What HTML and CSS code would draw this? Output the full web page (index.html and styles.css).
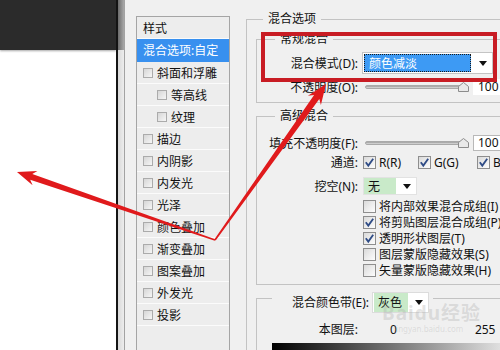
FILE: index.html
```html
<!DOCTYPE html>
<html lang="zh-CN">
<head>
<meta charset="utf-8">
<title>图层样式</title>
<link rel="stylesheet" href="styles.css">
</head>
<body>
<div class="page">
  <div class="canvas"><div class="canvas-top"></div></div>
  <div class="edge"></div>
  <div class="scroll"><div class="scroll-top"></div></div>
  <div class="dialog">
    <div class="styles-list">
      <div class="li head">样式</div>
      <div class="li sel">混合选项:自定</div>
      <div class="li"><span class="lcb"></span>斜面和浮雕</div>
      <div class="li sub"><span class="lcb"></span>等高线</div>
      <div class="li sub"><span class="lcb"></span>纹理</div>
      <div class="li"><span class="lcb"></span>描边</div>
      <div class="li"><span class="lcb"></span>内阴影</div>
      <div class="li"><span class="lcb"></span>内发光</div>
      <div class="li"><span class="lcb"></span>光泽</div>
      <div class="li"><span class="lcb"></span>颜色叠加</div>
      <div class="li"><span class="lcb"></span>渐变叠加</div>
      <div class="li"><span class="lcb"></span>图案叠加</div>
      <div class="li"><span class="lcb"></span>外发光</div>
      <div class="li"><span class="lcb"></span>投影</div>
    </div>
    <fieldset class="grp outer">
      <legend>混合选项</legend>
      <fieldset class="grp inner general">
        <legend>常规混合</legend>
        <div class="row r-mode">
          <span class="lab">混合模式(D):</span>
          <div class="select mode"><span class="val blue">颜色减淡</span><span class="caret"></span></div>
        </div>
        <div class="row r-opac">
          <span class="lab">不透明度(O):</span>
          <div class="slider"><span class="track"></span><svg class="thumb" width="11" height="10" viewBox="0 0 11 10"><polygon points="5.5,0.5 10.5,4.5 10.5,9.5 0.5,9.5 0.5,4.5" fill="#e9e9e9" stroke="#8c8c8c"/></svg></div>
          <span class="num plain">100</span>
        </div>
      </fieldset>
      <fieldset class="grp inner advanced">
        <legend>高级混合</legend>
        <div class="row r-fill">
          <span class="lab">填充不透明度(F):</span>
          <div class="slider"><span class="track"></span><svg class="thumb" width="11" height="10" viewBox="0 0 11 10"><polygon points="5.5,0.5 10.5,4.5 10.5,9.5 0.5,9.5 0.5,4.5" fill="#e9e9e9" stroke="#8c8c8c"/></svg></div>
          <span class="num">100</span>
        </div>
        <div class="row r-chan">
          <span class="lab">通道:</span>
          <span class="opt w1"><span class="ck"><svg width="11" height="11" viewBox="0 0 11 11"><path d="M1.8 5.2 L4.3 8.6 L9.2 1.8" fill="none" stroke="#2f4c86" stroke-width="1.8"/></svg></span>R(R)</span>
          <span class="opt w2"><span class="ck"><svg width="11" height="11" viewBox="0 0 11 11"><path d="M1.8 5.2 L4.3 8.6 L9.2 1.8" fill="none" stroke="#2f4c86" stroke-width="1.8"/></svg></span>G(G)</span>
          <span class="opt"><span class="ck"><svg width="11" height="11" viewBox="0 0 11 11"><path d="M1.8 5.2 L4.3 8.6 L9.2 1.8" fill="none" stroke="#2f4c86" stroke-width="1.8"/></svg></span>B(B)</span>
        </div>
        <div class="row r-knock">
          <span class="lab">挖空(N):</span>
          <div class="select knock"><span class="val green">无</span><span class="caret"></span></div>
        </div>
        <div class="checks">
          <div class="opt line"><span class="ck"></span>将内部效果混合成组(I)</div>
          <div class="opt line"><span class="ck"><svg width="11" height="11" viewBox="0 0 11 11"><path d="M1.8 5.2 L4.3 8.6 L9.2 1.8" fill="none" stroke="#2f4c86" stroke-width="1.8"/></svg></span>将剪贴图层混合成组(P)</div>
          <div class="opt line"><span class="ck"><svg width="11" height="11" viewBox="0 0 11 11"><path d="M1.8 5.2 L4.3 8.6 L9.2 1.8" fill="none" stroke="#2f4c86" stroke-width="1.8"/></svg></span>透明形状图层(T)</div>
          <div class="opt line"><span class="ck"></span>图层蒙版隐藏效果(S)</div>
          <div class="opt line"><span class="ck"></span>矢量蒙版隐藏效果(H)</div>
        </div>
      </fieldset>
      <fieldset class="grp inner blendif">
        <legend><span class="lg-row"><span class="blab">混合颜色带(E):</span><span class="select gray"><span class="val green">灰色</span><span class="caret"></span></span></span></legend>
        <div class="row r-layer">
          <span class="lab">本图层:</span>
          <span class="v0">0</span>
          <span class="v255">255</span>
        </div>
        <div class="ramp"></div>
      </fieldset>
    </fieldset>
  </div>
  <div class="mark"><span class="mk-big">Baidu经验</span><span class="mk-small">jingyan.baidu.com</span></div>
  <div class="callout"></div>
  <svg class="arrows" width="500" height="350" viewBox="0 0 500 350">
    <polygon fill="#e01a1c" points="17,172 37.4,171.1 32.3,173.9 215.2,239.3 214.8,240.7 30.2,179.8 32.6,185.3"/>
    <polygon fill="#e01a1c" points="326,84 320.9,104.9 319.3,98.9 215.7,240.5 214.3,239.5 314.1,95.1 307.9,95.7"/>
  </svg>
</div>
</body>
</html>
```
FILE: styles.css
```css
* { box-sizing: border-box; }
html, body { margin: 0; padding: 0; }
body {
  width: 500px;
  height: 350px;
  overflow: hidden;
  background: #fff;
  font-family: "Noto Sans", "Noto Sans CJK SC", sans-serif;
  font-size: 12px;
  color: #111;
}
.page {
  position: relative;
  display: flex;
  width: 500px;
  height: 350px;
  overflow: hidden;
}
.canvas { width: 116px; flex: none; background: #fff; }
.canvas-top { height: 50px; background: #2b2b2b; box-shadow: 0 1px 2px rgba(0,0,0,0.35); }
.edge { width: 2px; flex: none; background: #141414; }
.scroll {
  width: 7px;
  flex: none;
  background: linear-gradient(90deg, #d9d9d9, #ededed);
  border-right: 1px solid #a3a3a3;
}
.scroll-top { height: 50px; background: linear-gradient(90deg, #6c6c6c, #a9a9a9); }

.dialog {
  flex: 1;
  min-width: 0;
  display: flex;
  align-items: flex-start;
  gap: 16px;
  padding: 12px 0 0 11px;
  background: #f0f0f0;
  overflow: hidden;
}

/* styles list */
.styles-list {
  flex: none;
  width: 94px;
  height: 340px;
  margin-top: 4px;
  border: 1px solid #a5a5a5;
  background: #ededed;
}
.li {
  display: flex;
  align-items: center;
  height: 22px;
  padding-left: 6px;
  border-bottom: 1px solid #fbfbfb;
  white-space: nowrap;
}
.li.head { height: 22px; }
.li.sel { height: 23px; background: #3890ef; color: #fff; border-bottom-color: #3890ef; }
.li.sub { padding-left: 20px; }
.lcb {
  flex: none;
  width: 10px;
  height: 10px;
  margin-right: 4px;
  border: 1px solid #ababab;
  background: linear-gradient(135deg, #d6d6d6, #f6f6f6);
}

/* group boxes */
.grp {
  margin: 0;
  padding: 0;
  min-width: 0;
  border: 1px solid #c3c3c3;
}
.grp > legend { padding: 0 5px; line-height: 14px; }
.outer { flex: none; width: 280px; height: 360px; padding: 0 0 0 9px; }
.outer > legend { margin-left: 7px; }
.inner > legend { margin-left: 18px; }
.general { margin-top: 6px; padding-bottom: 4px; }
.advanced { margin-top: 6px; padding-bottom: 6px; }

.row { display: flex; align-items: center; white-space: nowrap; }
.lab { flex: none; width: 101px; text-align: right; }

.r-mode { height: 22px; margin-top: 6px; }
.r-opac { height: 22px; margin-top: 2px; }
.r-fill { height: 17px; margin-top: 11px; }
.r-chan { height: 16px; margin-top: 3px; }
.r-knock { height: 18px; margin-top: 7px; }

/* selects */
.select {
  flex: none;
  display: flex;
  align-items: center;
  background: #fff;
  border: 1px solid #c4c4c4;
}
.val { display: flex; align-items: center; height: 100%; }
.val.blue {
  width: 107px;
  height: 18px;
  margin-left: 1px;
  padding-left: 4px;
  background: #3d9af4;
  color: #fff;
  border: 1px dotted #1a1a1a;
}
.val.green { background: #c9eac9; padding-left: 4px; }
.caret {
  width: 0;
  height: 0;
  border-left: 4.5px solid transparent;
  border-right: 4.5px solid transparent;
  border-top: 5px solid #111;
}
.mode { width: 131px; height: 22px; margin-left: 4px; }
.mode .caret { margin-left: 8px; }
.knock { width: 54px; height: 18px; margin-left: 5px; border-color: #e2e2e2; }
.knock .val { width: 32px; }
.knock .caret { margin-left: 7px; }

/* sliders */
.slider { position: relative; flex: none; width: 103px; height: 12px; margin-left: 7px; }
.track {
  display: block;
  margin-top: 4px;
  height: 4px;
  border-radius: 2px;
  background: linear-gradient(#9b9b9b, #dedede);
  border: 1px solid #a9a9a9;
}
.thumb { position: absolute; left: 93px; top: 1px; }
.num {
  flex: none;
  width: 32px;
  height: 16px;
  margin-left: 5px;
  padding-left: 4px;
  line-height: 14px;
  background: #fff;
  border: 1px solid #b8b8b8;
}
.num.plain { border-color: #fff; }

/* checkboxes */
.opt { display: flex; align-items: center; white-space: nowrap; }
.w1 { width: 55px; margin-left: 5px; }
.w2 { width: 59px; }
.ck {
  flex: none;
  display: flex;
  width: 13px;
  height: 13px;
  margin-right: 3px;
  border: 1px solid #8e8e8e;
  background: linear-gradient(135deg, #dadada, #fdfdfd);
}
.checks { margin-top: 3px; padding-left: 106px; }
.line { height: 16px; }

/* blend-if */
.blendif { margin-top: -2px; height: 80px; }
.blendif > legend { margin-left: 15px; padding: 9px 4px 0 20px; }
.lg-row { display: flex; align-items: center; }
.blab { line-height: 21px; }
.gray { width: 57px; height: 21px; margin-left: 3px; border-color: #dcdcdc; }
.gray .val { width: 34px; margin-left: 1px; }
.gray .caret { margin-left: 7px; }
.r-layer { height: 16px; margin-top: 8px; }
.v0 { margin-left: 32px; }
.v255 { margin-left: 78px; }
.ramp {
  width: 260px;
  height: 12px;
  margin: 6px 0 0 15px;
  background: linear-gradient(90deg, #000, #8a8a8a 55%, #fff);
}

/* overlays */
.mark {
  position: absolute;
  left: 382px;
  top: 302px;
  display: flex;
  flex-direction: column;
  align-items: flex-start;
  pointer-events: none;
}
.mk-big { font-size: 19px; font-weight: 700; line-height: 22px; color: rgba(170,170,170,0.33); letter-spacing: 1px; }
.mk-small { font-size: 8px; line-height: 10px; margin-left: 12px; color: rgba(170,170,170,0.3); }
.callout {
  position: absolute;
  left: 261px;
  top: 32px;
  width: 236px;
  height: 50px;
  border: 4px solid #c81c24;
}
.arrows { position: absolute; left: 0; top: 0; pointer-events: none; }
```
